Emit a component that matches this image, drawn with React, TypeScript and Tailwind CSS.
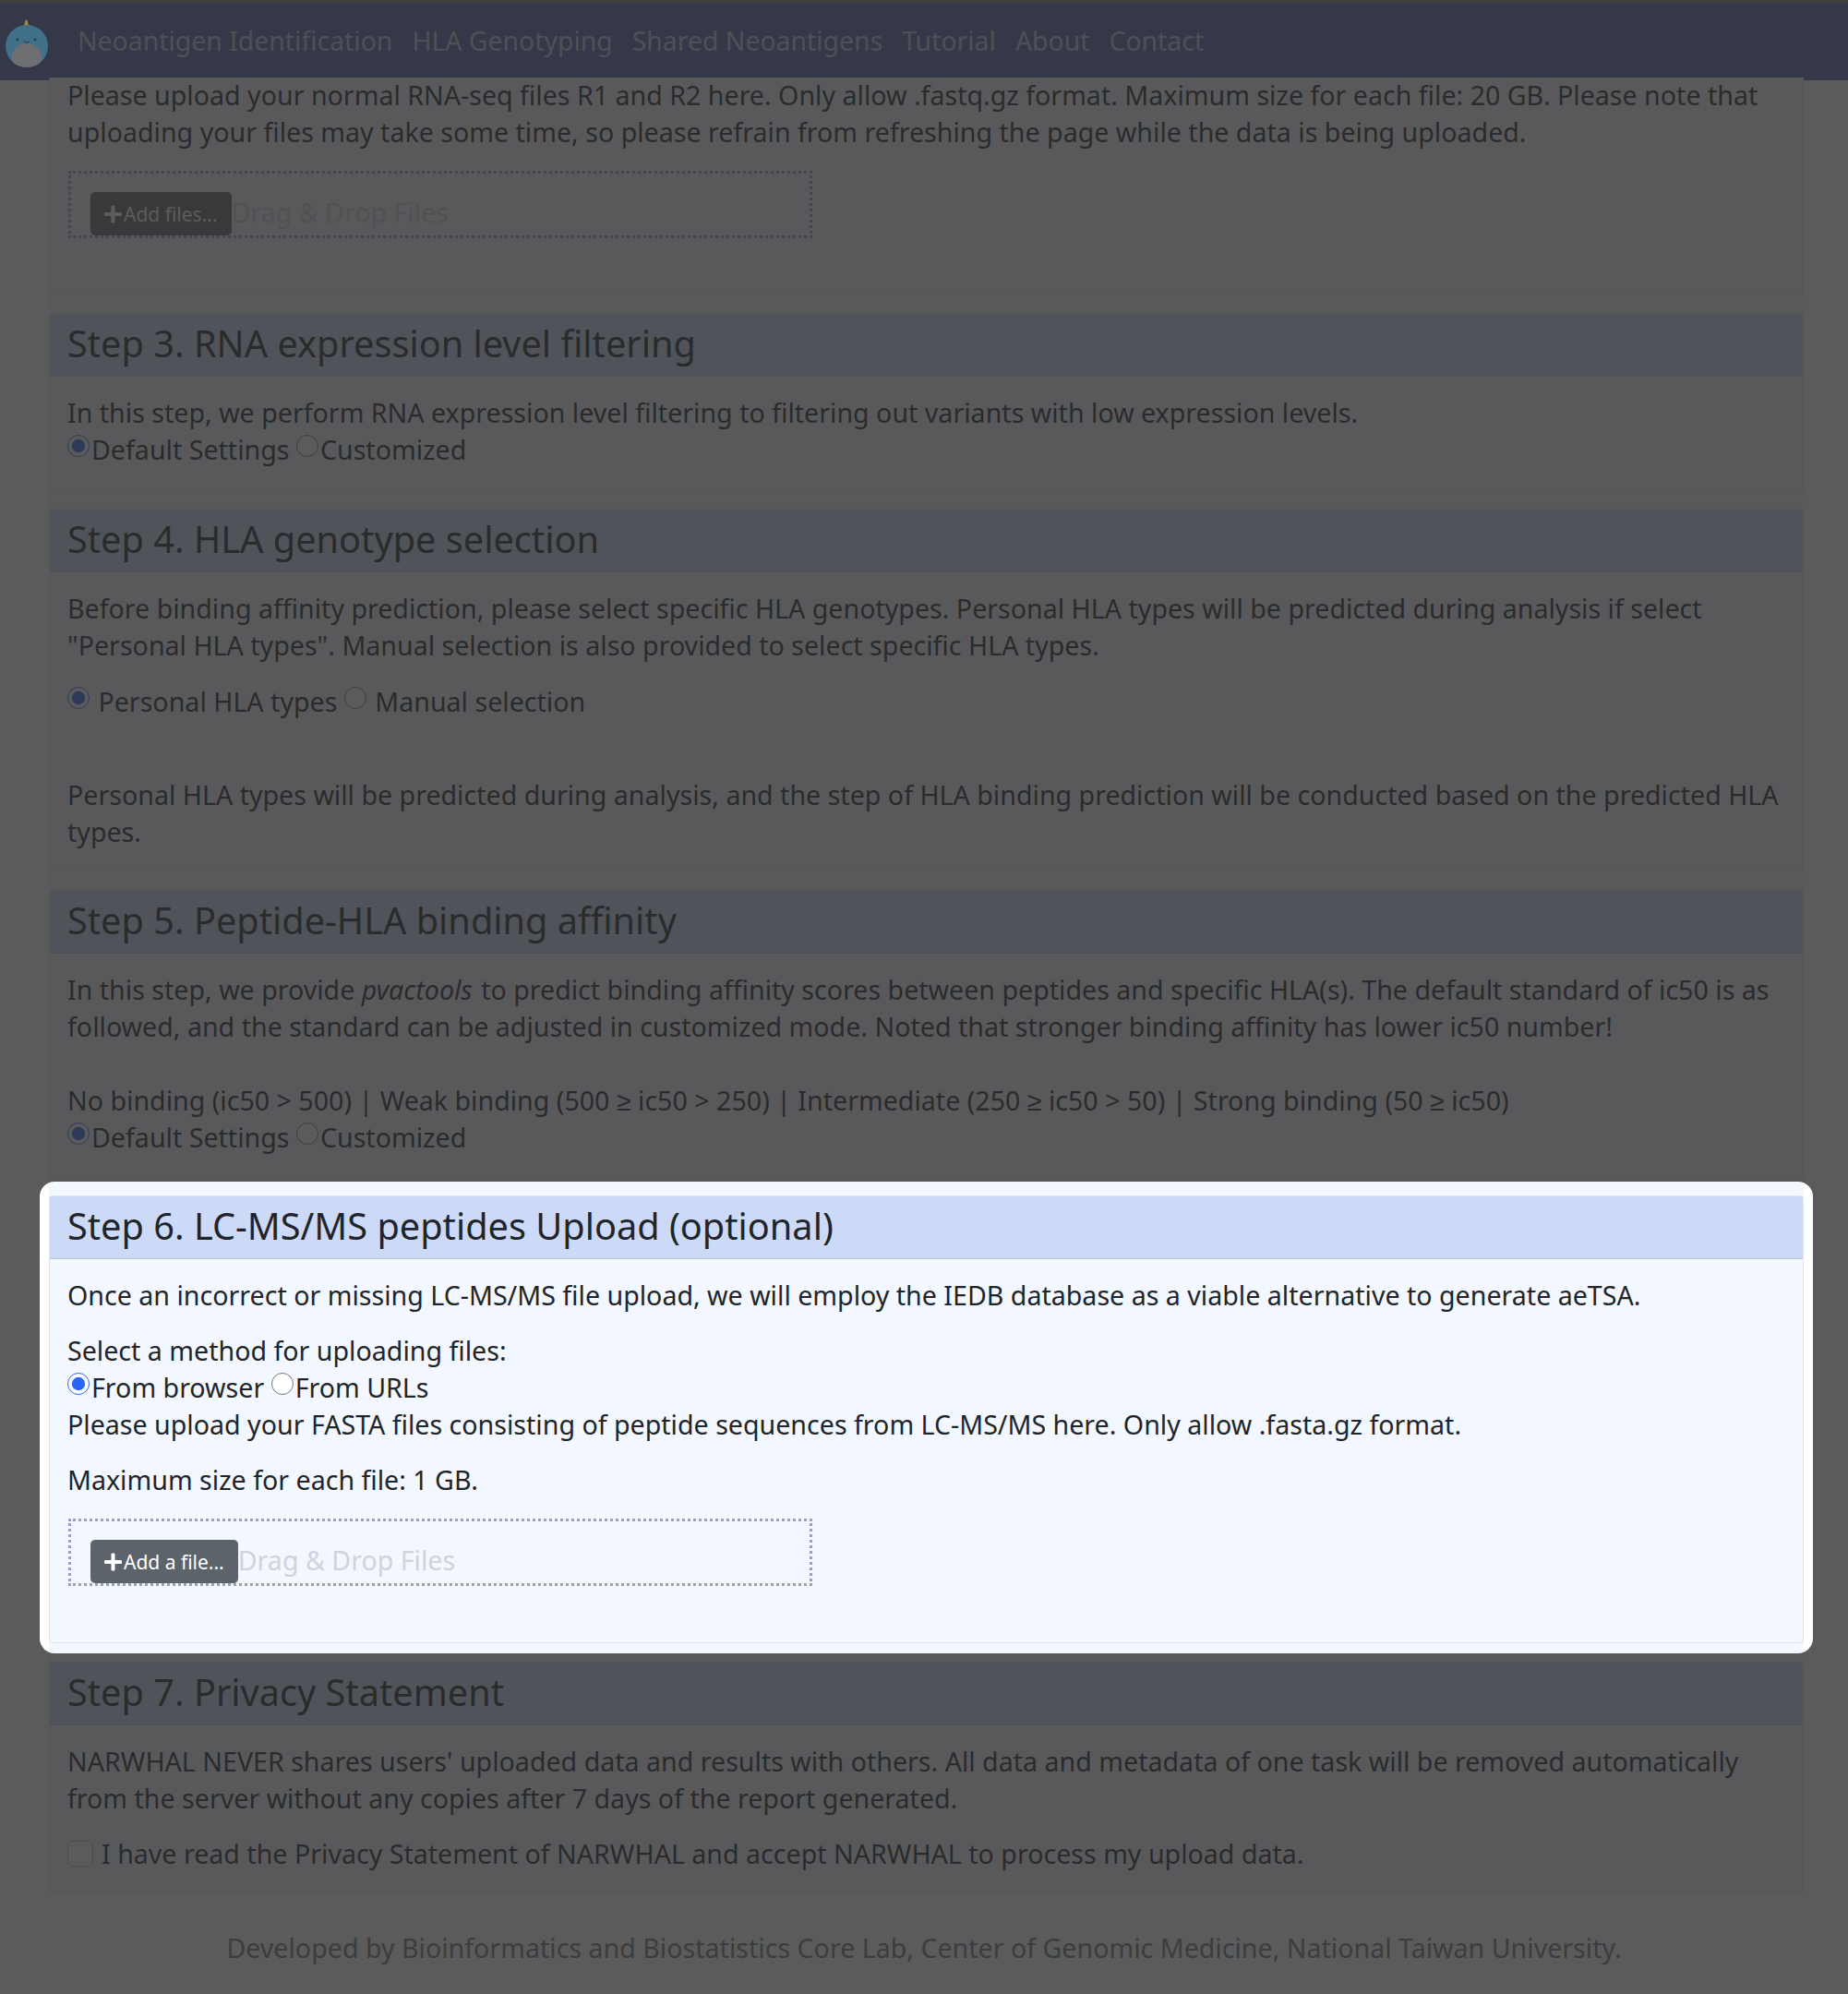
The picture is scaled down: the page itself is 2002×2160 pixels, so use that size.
import { FaPlus } from "react-icons/fa";

function Radio({ checked, name }: { checked?: boolean; name: string }) {
  return (
    <input
      type="radio"
      name={name}
      defaultChecked={checked}
      className="mr-[2px] h-6 w-6 align-[3px] accent-[#2b66f6]"
    />
  );
}

function Card({
  title,
  children,
  className,
}: {
  title?: string;
  children: React.ReactNode;
  className?: string;
}) {
  return (
    <section className={"mb-5 rounded-[4px] border border-[#dfe3ec] " + (className ?? "")}>
      {title && (
        <h3 className="h-[68px] border-b border-[#b9c6e6] bg-[#ccdaf7] pl-[19px] pr-5 text-[39.7px] leading-[65px] text-[#212529]">
          {title}
        </h3>
      )}
      <div className="pl-[19px] pr-5 pt-[19px] pb-[22px]">{children}</div>
    </section>
  );
}

function Dropzone({ label, className }: { label: string; className: string }) {
  return (
    <div className={"ml-px mt-[22px] flex h-[73px] w-[806px] items-start border-[3px] border-dotted border-[#9d9dca] pl-[21px] pt-5 " + className}>
      <button className="flex h-[47px] items-center gap-[2px] rounded-[5px] bg-[#5c636a] px-[15px] text-[21px] text-white">
        <FaPlus className="h-[22px] w-[19px]" />
        {label}
      </button>
      <span className="leading-[44px] text-[#d0d2dc]">Drag &amp; Drop Files</span>
    </div>
  );
}

function Logo() {
  return (
    <svg viewBox="0 0 48 52" className="relative z-30 ml-[5px] mt-[17px] h-[52px] w-[48px]" aria-hidden>
      <defs>
        <clipPath id="narwhal-body">
          <circle cx="24" cy="29" r="23" />
        </clipPath>
      </defs>
      <path d="M20 10 L22.5 1 Q23.5 0 24.5 1 L27 10 Z" fill="#a08a3c" />
      <circle cx="24" cy="29" r="23" fill="#41718a" />
      <ellipse cx="24" cy="41" rx="16" ry="15" fill="#6d6f70" clipPath="url(#narwhal-body)" />
      <circle cx="14" cy="22" r="1.4" fill="#333a44" />
      <circle cx="33" cy="22" r="1.4" fill="#333a44" />
      <path d="M21 24 Q24 26 27 24" stroke="#333a44" strokeWidth="1.2" fill="none" />
    </svg>
  );
}

const navItems = ["Neoantigen Identification", "HLA Genotyping", "Shared Neoantigens", "Tutorial", "About", "Contact"];

export default function App() {
  return (
    <div className="relative h-[2160px] overflow-hidden bg-white font-['Noto_Sans',sans-serif] text-[28.6px] leading-[40px] text-[#212529]">
      <nav className="flex h-[87px] border-t-[4px] border-[#7a7b80] bg-[#4d5fa8]">
        <Logo />
        <ul className="ml-[31px] flex gap-[21px] pt-[20px] text-[28.4px] text-white/70">
          {navItems.map((item) => (
            <li key={item}>{item}</li>
          ))}
        </ul>
      </nav>

      <main className="ml-[53px] mr-[48px] bg-[#f3f7ff]">
        <Card className="-mt-[3px] border-t-0">
          <div className="-mt-5">
            <p>
              Please upload your normal RNA-seq files R1 and R2 here. Only allow .fastq.gz format. Maximum size for each
              file: 20 GB. Please note that uploading your files may take some time, so please refrain from refreshing
              the page while the data is being uploaded.
            </p>
            <Dropzone label="Add files..." className="mb-[38px]" />
          </div>
        </Card>

        <Card title="Step 3. RNA expression level filtering">
          <p>In this step, we perform RNA expression level filtering to filtering out variants with low expression levels.</p>
          <p className="mb-[1px]">
            <Radio name="s3" checked />
            Default Settings <Radio name="s3" />
            Customized
          </p>
        </Card>

        <Card title="Step 4. HLA genotype selection">
          <p className="mb-[21px]">
            Before binding affinity prediction, please select specific HLA genotypes. Personal HLA types will be
            predicted during analysis if select "Personal HLA types". Manual selection is also provided to select
            specific HLA types.
          </p>
          <p className="mb-[61px]">
            <Radio name="s4" checked /> Personal HLA types <Radio name="s4" /> Manual selection
          </p>
          <p>
            Personal HLA types will be predicted during analysis, and the step of HLA binding prediction will be
            conducted based on the predicted HLA types.
          </p>
        </Card>

        <Card title="Step 5. Peptide-HLA binding affinity">
          <p className="mb-10">
            In this step, we provide <em className="pr-[2px]">pvactools</em> to predict binding affinity scores between peptides and specific
            HLA(s). The default standard of ic50 is as followed, and the standard can be adjusted in customized mode.
            Noted that stronger binding affinity has lower ic50 number!
          </p>
          <p>No binding (ic50 &gt; 500) | Weak binding (500 ≥ ic50 &gt; 250) | Intermediate (250 ≥ ic50 &gt; 50) | Strong binding (50 ≥ ic50)</p>
          <p>
            <Radio name="s5" checked />
            Default Settings <Radio name="s5" />
            Customized
          </p>
        </Card>

        <Card title="Step 6. LC-MS/MS peptides Upload (optional)">
          <p className="mb-5">
            Once an incorrect or missing LC-MS/MS file upload, we will employ the IEDB database as a viable alternative
            to generate aeTSA.
          </p>
          <p>Select a method for uploading files:</p>
          <p>
            <Radio name="s6" checked />
            From browser <Radio name="s6" />
            From URLs
          </p>
          <p className="mb-5">
            Please upload your FASTA files consisting of peptide sequences from LC-MS/MS here. Only allow .fasta.gz
            format.
          </p>
          <p className="mb-[1px]">Maximum size for each file: 1 GB.</p>
          <Dropzone label="Add a file..." className="mb-[39px]" />
        </Card>

        <Card title="Step 7. Privacy Statement" className="!mb-0">
          <p className="mb-5">
            NARWHAL NEVER shares users' uploaded data and results with others. All data and metadata of one task will be
            removed automatically from the server without any copies after 7 days of the report generated.
          </p>
          <label className="flex items-center gap-[9px]">
            <span className="h-7 w-7 rounded-[6px] border border-[#b8babf] bg-white" />I have read the Privacy Statement
            of NARWHAL and accept NARWHAL to process my upload data.
          </label>
        </Card>
      </main>

      <footer className="pt-[39px] text-center text-[#6c757d]">
        Developed by Bioinformatics and Biostatistics Core Lab, Center of Genomic Medicine, National Taiwan University.
      </footer>

      {/* spotlight on step 6 */}
      <div className="absolute left-[43px] top-[1280px] z-20 h-[511px] w-[1921px] rounded-[16px] shadow-[0_0_0_3000px_rgba(45,45,45,0.78)]" />
    </div>
  );
}
